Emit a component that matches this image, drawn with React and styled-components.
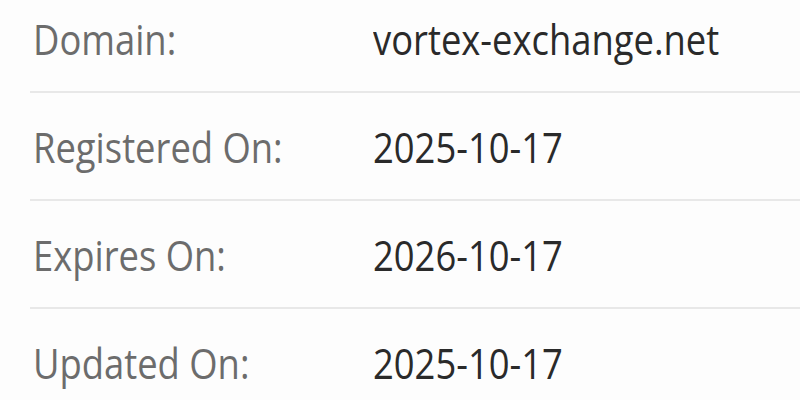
import React from 'react'
import styled, { createGlobalStyle } from 'styled-components';

const GlobalStyle = createGlobalStyle`
body {
  margin: 0;
  background: #fdfdfd;
  font-family: "Open Sans", "Liberation Sans", sans-serif;
}
`

const Section = styled.section`
width: 800px;
height: 400px;
overflow: hidden;
background-color: #fdfdfd;
`

const List = styled.dl`
margin: -15px 0 0 30px;
padding: 0;
`

const Row = styled.div`
display: grid;
grid-template-columns: 343px 1fr;
align-items: center;
height: 106px;
border-bottom: 2px solid #e8e8e8;
font-size: 42px;
`

// the screenshot text is a little narrower than plain Open Sans
const Text = styled.span`
display: inline-block;
white-space: nowrap;
transform: scaleX(0.866);
transform-origin: left center;
`

const Label = styled.dt`
margin: 0;
padding-left: 3px;
color: #6c6c6c;
`

const Value = styled.dd`
margin: 0;
color: #2a2a2a;
`

const rows = [
    ['Domain:', 'vortex-exchange.net'],
    ['Registered On:', '2025-10-17'],
    ['Expires On:', '2026-10-17'],
    ['Updated On:', '2025-10-17'],
]

const App = () => {
    return(
        <Section>
            <GlobalStyle />
            <List>
                {rows.map(([label, value]) => (
                    <Row key={label}>
                        <Label><Text>{label}</Text></Label>
                        <Value><Text>{value}</Text></Value>
                    </Row>
                ))}
            </List>
        </Section>
    );
};

export default App
